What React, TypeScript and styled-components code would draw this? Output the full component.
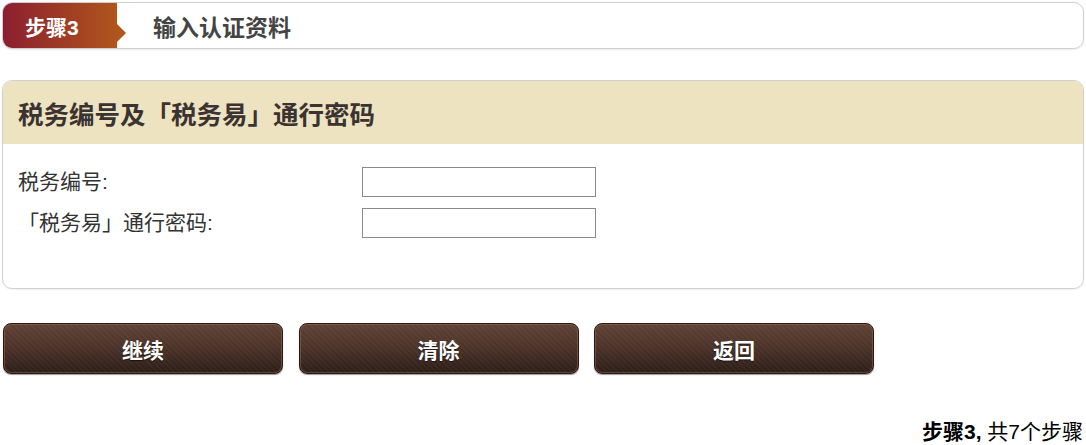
import styled, { createGlobalStyle } from "styled-components";

const GlobalStyle = createGlobalStyle`
	body {
		margin: 0;
		background: #fff;
		font-family: "Liberation Sans", Arial, "Noto Sans CJK SC", sans-serif;
	}
`;

const Page = styled.div`
	padding: 2px 2px 0 2px;
	width: 1082px;
`;

const StepBar = styled.div`
	display: flex;
	align-items: center;
	height: 45px;
	border: 1px solid #cfcfcf;
	border-radius: 10px;
	box-shadow: 0 1px 2px rgba(0, 0, 0, 0.08);
	overflow: hidden;
`;

const StepBadge = styled.div`
	position: relative;
	display: flex;
	align-items: center;
	height: 100%;
	width: 114px;
	padding-left: 22px;
	box-sizing: border-box;
	background: linear-gradient(90deg, #8c1f2f 0%, #9d3a26 50%, #b0551d 100%);
	color: #fff;
	font-size: 21px;
	font-weight: bold;
	&::after {
		content: "";
		position: absolute;
		right: -9px;
		top: 21px;
		border-top: 9px solid transparent;
		border-bottom: 9px solid transparent;
		border-left: 9px solid #b0551d;
	}
`;

const StepTitle = styled.div`
	margin-left: 36px;
	font-size: 23px;
	font-weight: bold;
	color: #444;
`;

const Panel = styled.section`
	margin-top: 31px;
	border: 1px solid #d0d0d0;
	border-radius: 10px;
	overflow: hidden;
	box-shadow: 0 1px 2px rgba(0, 0, 0, 0.06);
`;

const PanelHead = styled.h2`
	margin: 0;
	height: 63px;
	display: flex;
	align-items: center;
	padding-left: 15px;
	background: #ede3c0;
	font-size: 25.5px;
	font-weight: bold;
	color: #3b3331;
`;

const PanelBody = styled.div`
	display: grid;
	grid-template-columns: 344px 234px;
	row-gap: 11px;
	padding: 23px 15px 50px 15px;
`;

const Label = styled.label`
	font-size: 21px;
	color: #333;
	line-height: 30px;
`;

const Field = styled.input`
	width: 234px;
	height: 30px;
	box-sizing: border-box;
	border: 1px solid #8a8a8a;
	padding: 2px 4px;
	font-size: 16px;
`;

const Actions = styled.div`
	display: flex;
	gap: 15.5px;
	margin-top: 34px;
	padding-left: 1px;
`;

const Button = styled.button`
	width: 280px;
	height: 51px;
	border: 1px solid #2a1a14;
	border-radius: 8px;
	background:
		repeating-linear-gradient(45deg, rgba(255, 255, 255, 0.03) 0 2px, transparent 2px 4px),
		linear-gradient(180deg, #604134 0%, #4c3329 45%, #2b1d17 100%);
	box-shadow: inset 0 0 0 1px rgba(160, 110, 85, 0.45), 0 1px 1px rgba(0, 0, 0, 0.4);
	color: #fff;
	font-family: "Liberation Sans", Arial, "Noto Sans CJK SC", sans-serif;
	font-size: 21px;
	font-weight: bold;
	text-shadow: 0 1px 1px rgba(0, 0, 0, 0.6);
	cursor: pointer;
`;

const Footer = styled.div`
	margin-top: 41px;
	text-align: right;
	padding-right: 1px;
	font-size: 21px;
	color: #000;
	b {
		font-weight: bold;
	}
`;

export default function App() {
	return (
		<>
			<GlobalStyle />
			<Page>
				<StepBar>
					<StepBadge>步骤3</StepBadge>
					<StepTitle>输入认证资料</StepTitle>
				</StepBar>
				<Panel>
					<PanelHead>税务编号及「税务易」通行密码</PanelHead>
					<PanelBody>
						<Label htmlFor="taxNo">税务编号:</Label>
						<Field id="taxNo" type="text" />
						<Label htmlFor="pwd">「税务易」通行密码:</Label>
						<Field id="pwd" type="password" />
					</PanelBody>
				</Panel>
				<Actions>
					<Button>继续</Button>
					<Button>清除</Button>
					<Button>返回</Button>
				</Actions>
				<Footer>
					<b>步骤3,</b> 共7个步骤
				</Footer>
			</Page>
		</>
	);
}
